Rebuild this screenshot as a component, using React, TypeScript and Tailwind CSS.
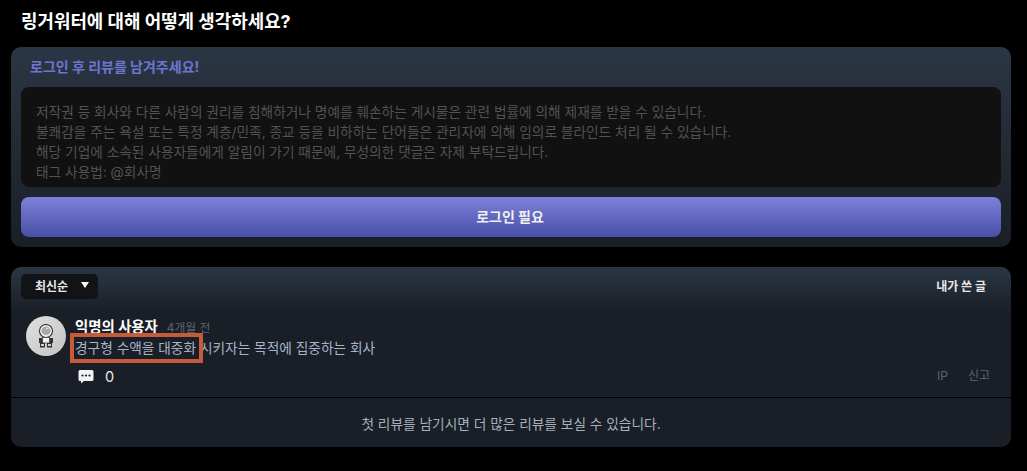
const FONT = "font-['Inter','Noto_Sans_CJK_KR',sans-serif]";

function Astronaut() {
  return (
    <svg viewBox="0 0 16 24" className="h-[24px] w-[16px]">
      <circle cx="8" cy="7" r="6.500" fill="#f0f0f0" stroke="#2e2e2e" strokeWidth="1.100" />
      <ellipse cx="8" cy="6.800" rx="4.600" ry="4.300" fill="#a8a8a8" />
      <path d="M8 3.800 h2.500 v1.200 h-2.500z" fill="#e2e2e2" />
      <rect x="1" y="14" width="14" height="5" fill="#333333" />
      <rect x="4.500" y="13.500" width="7" height="5.500" fill="#f0f0f0" stroke="#333333" strokeWidth="0.700" />
      <rect x="2" y="19" width="5" height="4.500" fill="#333333" />
      <rect x="9" y="19" width="5" height="4.500" fill="#333333" />
      <rect x="3" y="20" width="3" height="2" fill="#d0d0d0" />
      <rect x="10" y="20" width="3" height="2" fill="#d0d0d0" />
    </svg>
  );
}

function CommentIcon() {
  return (
    <svg viewBox="0 0 16 15" className="h-[15px] w-[16px]">
      <path d="M2 1h12a1.500 1.500 0 0 1 1.500 1.500v8a1.500 1.500 0 0 1-1.500 1.500H6l-3 2.500V12H2A1.500 1.500 0 0 1 .5 10.500v-8A1.500 1.500 0 0 1 2 1z" fill="#f2f2f2" />
      <circle cx="4.500" cy="6.500" r="1.100" fill="#1a1f27" />
      <circle cx="8" cy="6.500" r="1.100" fill="#1a1f27" />
      <circle cx="11.500" cy="6.500" r="1.100" fill="#1a1f27" />
    </svg>
  );
}

export default function App() {
  return (
    <div className={`${FONT} h-[471px] w-[1027px] overflow-hidden bg-black px-[11px] pt-[10px]`}>
      <h2 className="mb-[14px] h-[23px] pl-[10px] text-[17.9px] leading-[23px] font-bold text-white">
        링거워터에 대해 어떻게 생각하세요?
      </h2>

      {/* review form */}
      <section className="mb-5 h-[200px] w-[1000px] rounded-[10px] bg-gradient-to-b from-[#2b3644] to-[#1a1f26] px-[10px] pt-[9px]">
        <p className="mb-[10px] h-[21px] pl-[9px] text-[14px] leading-[21px] font-bold text-[#6d76d2]">
          로그인 후 리뷰를 남겨주세요!
        </p>
        <div className="h-[100px] rounded-[8px] bg-[#111111] px-[15px] py-[15px] text-[13.7px] leading-[20px] text-[#525252]">
          <p>저작권 등 회사와 다른 사람의 권리를 침해하거나 명예를 훼손하는 게시물은 관련 법률에 의해 제재를 받을 수 있습니다.</p>
          <p>불쾌감을 주는 욕설 또는 특정 계층/민족, 종교 등을 비하하는 단어들은 관리자에 의해 임의로 블라인드 처리 될 수 있습니다.</p>
          <p>해당 기업에 소속된 사용자들에게 알림이 가기 때문에, 무성의한 댓글은 자제 부탁드립니다.</p>
          <p>태그 사용법: @회사명</p>
        </div>
        <button className="mt-[10px] h-10 w-full rounded-[8px] bg-gradient-to-b from-[#7c82db] to-[#4a4fa6] pr-[2px] pb-[2px] text-[14px] font-bold text-[#f0f0f0]">
          로그인 필요
        </button>
      </section>

      {/* review list */}
      <section className="relative h-[180px] w-[1000px] rounded-[10px] bg-[linear-gradient(to_bottom,#2b3644_0,#1a1f27_45px)]">
        <div className="flex items-center justify-between pt-[7px] pr-[25px] pl-[10px]">
          <div className="flex h-[25px] w-[77px] items-center rounded-[5px] bg-[#111317] pl-[14px] text-[12px] font-bold text-[#e8e8e8]">
            최신순
            <span className="mb-[3px] ml-[13px] h-0 w-0 border-x-[4px] border-t-[6px] border-x-transparent border-t-white" />
          </div>
          <span className="text-[12px] font-bold text-[#e8e8e8]">내가 쓴 글</span>
        </div>

        <div className="flex pt-[17px] pl-[15px]">
          <div className="flex h-10 w-10 shrink-0 items-center justify-center rounded-full bg-gradient-to-br from-[#e0e0e0] to-[#c4c4c4]">
            <Astronaut />
          </div>
          <div className="ml-[9px] min-w-0">
            <div className="flex h-[19px] items-baseline">
              <span className="text-[14.4px] font-bold text-white">익명의 사용자</span>
              <span className="ml-[9px] text-[11.8px] text-[#5d636b]">4개월 전</span>
            </div>
            <p className="mt-[2px] h-[24px] text-[13.7px] leading-[22px] text-[#a5b4c8]">
              경구형 수액을 대중화 시키자는 목적에 집중하는 회사
            </p>
          </div>
        </div>

        <div className="mt-[4px] flex items-center justify-between pr-[21px] pl-[67px]">
          <div className="flex items-center gap-[11px] text-[14.5px] text-[#e8e8e8]">
            <CommentIcon />
            <span className="pt-[1px]">0</span>
          </div>
          <div className="flex gap-[20px] text-[12px] text-[#5f656d]">
            <span>IP</span>
            <span>신고</span>
          </div>
        </div>

        <div className="mt-[9px] border-t border-black pt-[16px] text-center text-[13.7px] leading-[20px] text-[#a5b0be]">
          첫 리뷰를 남기시면 더 많은 리뷰를 보실 수 있습니다.
        </div>

        {/* annotation box over the text */}
        <div className="absolute top-[66px] left-[59px] h-[30px] w-[133px] border-[4px] border-[#c85a3c]" />
      </section>
    </div>
  );
}
